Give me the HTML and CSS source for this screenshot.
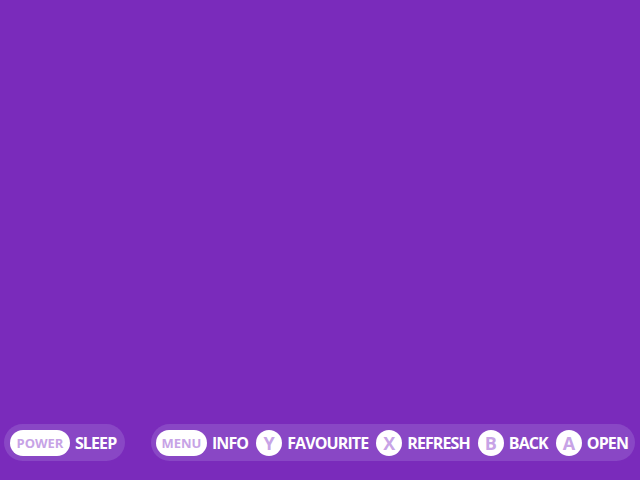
FILE: index.html
```html
<!DOCTYPE html>
<html>
<head>
<meta charset="utf-8">
<link rel="stylesheet" href="styles.css">
</head>
<body>
<div class="screen">
  <div class="bar">
    <div class="group group-single">
      <div class="hint"><span class="key pill">POWER</span><span class="label">SLEEP</span></div>
    </div>
    <div class="group">
      <div class="hint"><span class="key pill pill-tight">MENU</span><span class="label">INFO</span></div>
      <div class="hint"><span class="key circle">Y</span><span class="label">FAVOURITE</span></div>
      <div class="hint"><span class="key circle">X</span><span class="label">REFRESH</span></div>
      <div class="hint"><span class="key circle">B</span><span class="label">BACK</span></div>
      <div class="hint"><span class="key circle">A</span><span class="label">OPEN</span></div>
    </div>
  </div>
</div>
</body>
</html>
```
FILE: styles.css
```css
html, body {
  margin: 0;
  padding: 0;
}
body {
  width: 640px;
  height: 480px;
  background: #7a2bbb;
  font-family: "Open Sans", "Noto Sans", sans-serif;
  overflow: hidden;
}
.screen {
  height: 480px;
  display: flex;
  flex-direction: column;
  justify-content: flex-end;
}
.bar {
  display: flex;
  justify-content: space-between;
  padding: 0 5px 19px 4px;
}
.group {
  display: flex;
  align-items: center;
  gap: 8px;
  height: 37px;
  padding: 0 7px 0 5px;
  border-radius: 19px;
  background: #8947c5;
}
.group-single {
  padding: 0 9px 0 6px;
}
.hint {
  display: flex;
  align-items: center;
  gap: 5px;
}
.key {
  display: flex;
  align-items: center;
  justify-content: center;
  background: #ffffff;
  color: #c7a3e6;
  font-weight: 700;
  height: 26px;
}
.pill {
  border-radius: 13px;
  font-size: 13px;
  padding: 0 6.5px;
}
.pill-tight {
  padding: 0 5.5px;
}
.circle {
  width: 26px;
  border-radius: 50%;
  font-size: 18px;
}
.label {
  color: #ffffff;
  font-weight: 700;
  font-size: 16px;
  letter-spacing: -0.9px;
}
```
